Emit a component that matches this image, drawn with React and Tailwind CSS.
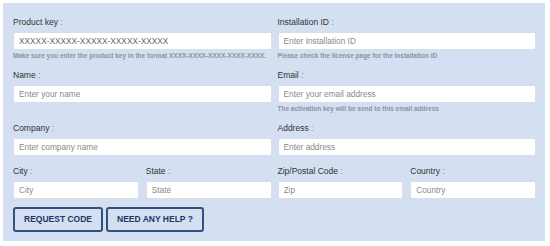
import React from 'react';

// Licence request form: two-column grid, rows spaced evenly, hints under some inputs.
function Label({ children }) {
  return (
    <label className="block text-[8.5px] leading-[11px] text-[#333] mb-[4px]">
      {children} <span className="text-[#888]">:</span>
    </label>
  );
}

function Field({ label, placeholder, hint, dark }) {
  return (
    <div className="flex flex-col">
      <Label>{label}</Label>
      <input
        type="text"
        placeholder={placeholder}
        className={
          'h-[18px] w-full rounded-[2px] border border-[#d6deeb] bg-white px-[5px] text-[8.3px] outline-none ' +
          (dark ? 'placeholder:text-[#666]' : 'placeholder:text-[#8a8a8a]')
        }
      />
      {hint && (
        <p className="mt-[2px] text-[6.5px] leading-[8px] font-bold text-[#8a93a3] whitespace-nowrap">{hint}</p>
      )}
    </div>
  );
}

export default function App() {
  return (
    <div className="min-h-[246px] bg-white pt-[3px] pl-[3px] font-['Liberation_Sans',Arial,sans-serif]">
      <form className="w-[542px] h-[238px] bg-[#d4dff2] pt-[14px] pl-[10px] pr-[9px] pb-[9px] flex flex-col">
        <div className="flex flex-col gap-[10px]">
          <div className="grid grid-cols-2 gap-x-[6px] items-start">
            <Field
              label="Product key"
              placeholder="XXXXX-XXXXX-XXXXX-XXXXX-XXXXX"
              hint="Make sure you enter the product key in the format XXXX-XXXX-XXXX-XXXX-XXXX."
              dark
            />
            <Field
              label="Installation ID"
              placeholder="Enter Installation ID"
              hint="Please check the license page for the Installation ID"
            />
          </div>

          <div className="grid grid-cols-2 gap-x-[6px] items-start">
            <Field label="Name" placeholder="Enter your name" />
            <Field
              label="Email"
              placeholder="Enter your email address"
              hint="The activation key will be send to this email address"
            />
          </div>

          <div className="grid grid-cols-2 gap-x-[6px] items-start">
            <Field label="Company" placeholder="Enter company name" />
            <Field label="Address" placeholder="Enter address" />
          </div>

          <div className="grid grid-cols-2 gap-x-[6px] items-start">
            <div className="grid grid-cols-2 gap-x-[7px]">
              <Field label="City" placeholder="City" />
              <Field label="State" placeholder="State" />
            </div>
            <div className="grid grid-cols-2 gap-x-[7px]">
              <Field label="Zip/Postal Code" placeholder="Zip" />
              <Field label="Country" placeholder="Country" />
            </div>
          </div>
        </div>

        <div className="flex gap-[3px] mt-[8px]">
          <button
            type="button"
            className="h-[25px] px-[9px] rounded-[3px] border-2 border-[#34507f] text-[8.5px] font-bold text-[#1f3864]"
          >
            REQUEST CODE
          </button>
          <button
            type="button"
            className="h-[25px] px-[9px] rounded-[3px] border-2 border-[#34507f] text-[8.5px] font-bold text-[#1f3864]"
          >
            NEED ANY HELP ?
          </button>
        </div>
      </form>
    </div>
  );
}
